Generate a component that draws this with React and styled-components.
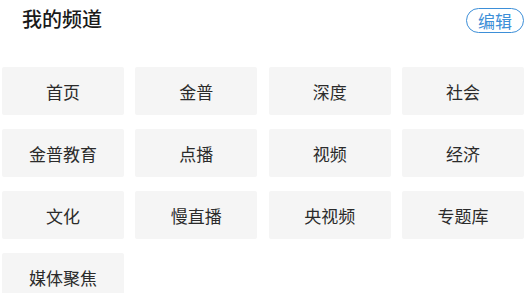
import React from "react";
import styled, { createGlobalStyle } from "styled-components";

const GlobalStyle = createGlobalStyle`
  html, body {
    margin: 0;
    padding: 0;
    background: #ffffff;
  }
  body {
    font-family: "Noto Sans CJK SC", "Noto Sans", sans-serif;
  }
`;

const Page = styled.div`
  width: 529px;
  height: 293px;
  overflow: hidden;
  box-sizing: border-box;
  padding: 0 5px 0 2px;
`;

const Header = styled.div`
  display: flex;
  align-items: center;
  justify-content: space-between;
  height: 38px;
  padding: 0 0 0 20px;
  margin-bottom: 29px;
`;

const Title = styled.h2`
  margin: 0;
  font-size: 20px;
  font-weight: 500;
  color: #1a1a1a;
  line-height: 38px;
`;

const EditButton = styled.button`
  width: 58px;
  height: 25px;
  box-sizing: border-box;
  border: 1px solid #3d8fd8;
  border-radius: 13px;
  background: #fff;
  color: #3d8fd8;
  font-family: inherit;
  font-size: 17px;
  line-height: 23px;
  padding: 0;
  margin-top: 2px;
  cursor: pointer;
`;

const Grid = styled.div`
  display: grid;
  grid-template-columns: repeat(4, 122px);
  column-gap: 11.33px;
  row-gap: 14px;
`;

const Tile = styled.div`
  height: 48px;
  display: flex;
  align-items: center;
  justify-content: center;
  background: #f5f5f5;
  border-radius: 2px;
  font-size: 17px;
  color: #2b2b2b;
`;

const channels = [
  "首页", "金普", "深度", "社会",
  "金普教育", "点播", "视频", "经济",
  "文化", "慢直播", "央视频", "专题库",
  "媒体聚焦",
];

export default function App() {
  return (
    <>
      <GlobalStyle />
      <Page>
        <Header>
          <Title>我的频道</Title>
          <EditButton>编辑</EditButton>
        </Header>
        <Grid>
          {channels.map((name) => (
            <Tile key={name}>{name}</Tile>
          ))}
        </Grid>
      </Page>
    </>
  );
}
